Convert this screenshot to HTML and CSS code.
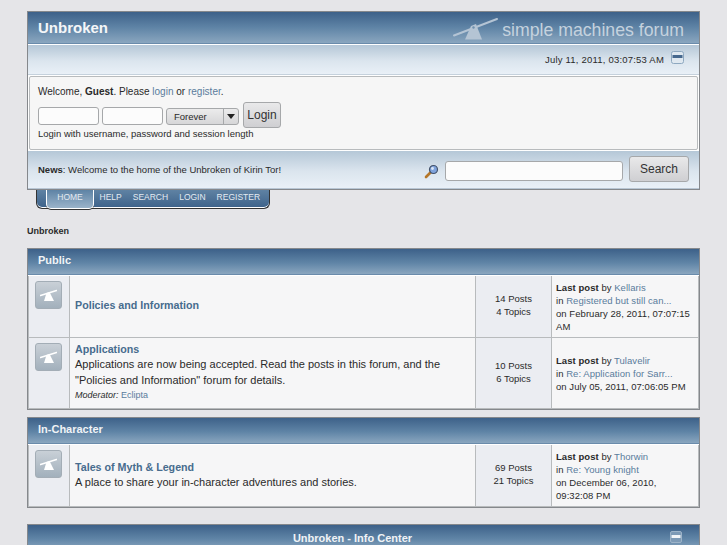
FILE: index.html
```html
<!DOCTYPE html>
<html lang="en">
<head>
  <meta charset="UTF-8" />
  <title>Unbroken - Index</title>
  <link rel="stylesheet" href="styles.css">
</head>
<body>

  <svg class="defs" width="0" height="0">
    <symbol id="seesaw" viewBox="0 0 45 22">
      <path d="M1 17.5 L44 1" stroke="currentColor" stroke-width="2" stroke-linecap="round" fill="none" />
      <path d="M18 8 L23 6 L29 21.5 L12 21.5 Z" fill="currentColor" />
      <circle cx="20.5" cy="9.5" r="1.2" fill="#6f90ae" />
    </symbol>
    <symbol id="seesaw-small" viewBox="0 0 17 12">
      <path d="M0.5 6.5 L16.5 1.5" stroke="currentColor" stroke-width="1.6" stroke-linecap="round" fill="none" />
      <path d="M6.5 4 L9.5 3 L14 12 L4 12 Z" fill="currentColor" />
    </symbol>
    <symbol id="minus" viewBox="0 0 13 13">
      <rect x="0.5" y="0.5" width="12" height="12" rx="2" fill="#dfe8f0" stroke="#8ea8c0" />
      <rect x="1.5" y="4" width="10" height="3" fill="#46688e" />
    </symbol>
    <symbol id="minus-light" viewBox="0 0 12 12">
      <rect x="0.5" y="0.5" width="11" height="11" rx="1.5" fill="#7d9ab6" stroke="#9db3c8" />
      <rect x="1.5" y="4" width="9" height="3" fill="#f2f5f8" />
    </symbol>
  </svg>

  <div class="header">
    <div class="titlebar">
      <h1>Unbroken</h1>
      <div class="smf-logo">
        <svg class="smf-mark" width="45" height="22"><use href="#seesaw" /></svg>
        <span>simple machines forum</span>
      </div>
    </div>
    <div class="datebar">
      <span>July 11, 2011, 03:07:53 AM</span>
      <svg class="toggle" width="13" height="13"><use href="#minus" /></svg>
    </div>
    <div class="userbox">
      <p class="welcome">Welcome, <b>Guest</b>. Please <a href="#">login</a> or <a href="#">register</a>.</p>
      <form class="loginform">
        <input type="text" class="field" />
        <input type="password" class="field" />
        <div class="select">
          <span class="select-label">Forever</span>
          <span class="select-arrow"></span>
        </div>
        <button type="button" class="btn btn-login">Login</button>
      </form>
      <p class="hint">Login with username, password and session length</p>
    </div>
    <div class="newsbar">
      <p class="news"><b>News</b>: Welcome to the home of the Unbroken of Kirin Tor!</p>
      <svg class="magnifier" width="15" height="15" viewBox="0 0 15 15">
        <path d="M7 8 L2 13" stroke="#b5772a" stroke-width="2.6" stroke-linecap="round" />
        <circle cx="9.5" cy="5.5" r="4" fill="#7fa3dc" stroke="#44536b" stroke-width="1.2" />
        <circle cx="8.5" cy="4.5" r="1.4" fill="#dbe7f7" />
      </svg>
      <input type="text" class="field searchfield" />
      <button type="button" class="btn btn-search">Search</button>
    </div>
  </div>

  <nav class="menu">
    <a href="#" class="active">HOME</a>
    <a href="#">HELP</a>
    <a href="#">SEARCH</a>
    <a href="#">LOGIN</a>
    <a href="#">REGISTER</a>
  </nav>

  <div class="crumb">Unbroken</div>

  <section class="category">
    <h2 class="cat-title">Public</h2>
    <div class="board board-short">
      <div class="board-icon"><span class="icon-box"><svg width="17" height="12"><use href="#seesaw-small" /></svg></span></div>
      <div class="board-info">
        <a href="#" class="board-name">Policies and Information</a>
      </div>
      <div class="board-stats">14 Posts<br>4 Topics</div>
      <div class="board-last"><div><b>Last post</b> by <a href="#">Kellaris</a><br>in <a href="#">Registered but still can...</a><br>on February 28, 2011, 07:07:15 AM</div></div>
    </div>
    <div class="board board-tall">
      <div class="board-icon"><span class="icon-box"><svg width="17" height="12"><use href="#seesaw-small" /></svg></span></div>
      <div class="board-info">
        <a href="#" class="board-name">Applications</a>
        <p>Applications are now being accepted. Read the posts in this forum, and the "Policies and Information" forum for details.</p>
        <p class="moderator"><em>Moderator:</em> <a href="#">Eclipta</a></p>
      </div>
      <div class="board-stats">10 Posts<br>6 Topics</div>
      <div class="board-last"><div><b>Last post</b> by <a href="#">Tulavelir</a><br>in <a href="#">Re: Application for Sarr...</a><br>on July 05, 2011, 07:06:05 PM</div></div>
    </div>
  </section>

  <section class="category">
    <h2 class="cat-title">In-Character</h2>
    <div class="board board-short">
      <div class="board-icon"><span class="icon-box"><svg width="17" height="12"><use href="#seesaw-small" /></svg></span></div>
      <div class="board-info">
        <a href="#" class="board-name">Tales of Myth &amp; Legend</a>
        <p>A place to share your in-character adventures and stories.</p>
      </div>
      <div class="board-stats">69 Posts<br>21 Topics</div>
      <div class="board-last"><div><b>Last post</b> by <a href="#">Thorwin</a><br>in <a href="#">Re: Young knight</a><br>on December 06, 2010, 09:32:08 PM</div></div>
    </div>
  </section>

  <section class="category infocenter">
    <h2 class="cat-title">Unbroken - Info Center
      <svg class="toggle-info" width="12" height="12"><use href="#minus-light" /></svg>
    </h2>
  </section>

</body>
</html>
```
FILE: styles.css
```css
html { height: 100%; overflow: hidden; }
body { margin: 0; height: 100%; overflow: hidden; padding: 11px 27px 0; box-sizing: border-box; background: #e5e5e8; font-family: "Liberation Sans", Arial, sans-serif; font-size: 10px; color: #2a2a2a; }
a { color: #5a7c9c; text-decoration: none; }
p, h1, h2 { margin: 0; }
.defs { position: absolute; }

.header { border: 1px solid #85888c; background: #fff; }
.titlebar { height: 31px; display: flex; align-items: center; justify-content: space-between; padding: 0 15px 0 10px; background: linear-gradient(#3d6189, #5f84a6 50%, #8aa6bf); border-bottom: 1px solid #6a8bab; }
.titlebar h1 { font-size: 15px; font-weight: bold; color: #f4f6f8; }
.smf-logo { display: flex; align-items: center; color: #c5d2de; font-size: 17.7px; gap: 4px; padding-top: 5px; }
.smf-mark { color: #b4c4d4; margin-top: -2px; }
.datebar { height: 31px; display: flex; align-items: center; justify-content: flex-end; gap: 7px; padding: 0 15px 0 0; box-sizing: border-box; border-top: 1px solid #fff; border-bottom: 1px solid #c5d1dc; background: linear-gradient(#b5c7d7, #dbe5ee 55%, #e9f0f7); font-size: 9.5px; letter-spacing: 0.2px; }
.datebar .toggle { margin-top: -4px; }
.userbox { margin: 1px; height: 74px; box-sizing: border-box; border: 1px solid #b8bbbd; border-radius: 2px; background: #f6f6f6; padding: 8px 8px 0; }
.welcome { font-size: 10px; line-height: 13px; }
.loginform { display: flex; align-items: center; gap: 3px; margin-top: 3px; height: 28px; }
.field { height: 18px; width: 61px; padding: 0; box-sizing: border-box; border: 1px solid #a6a8aa; border-radius: 3px; background: #fcfcfc; margin-top: 2px; }
.select { width: 73px; height: 17px; margin-top: 2px; display: flex; box-sizing: border-box; border: 1px solid #a6a8aa; border-radius: 3px; background: linear-gradient(#ececec, #d6d6d8); font-size: 9.5px; }
.select-label { flex: 1; line-height: 16px; padding-left: 7px; border-right: 1px solid #a6a8aa; }
.select-arrow { width: 14px; position: relative; }
.select-arrow::after { content: ""; position: absolute; left: 3px; top: 5px; border: 4px solid transparent; border-top: 5px solid #222; border-bottom: 0; }
.btn { padding: 0; box-sizing: border-box; border: 1px solid #a6a8aa; border-radius: 3px; background: linear-gradient(#e9e9ea, #cfcfd2); font-family: "Liberation Sans", Arial, sans-serif; font-size: 12px; color: #333; }
.btn-login { width: 38px; height: 26px; margin-left: 1px; }
.hint { font-size: 9.5px; line-height: 12px; margin-top: -1px; }
.newsbar { height: 38px; box-sizing: border-box; display: flex; align-items: center; padding: 0 10px 1px 10px; background: linear-gradient(#b5c7d7, #dbe5ee 55%, #e9f0f7); border-bottom: 1px solid #b8c6d4; }
.news { flex: 1; font-size: 9.5px; }
.magnifier { margin-right: 6px; margin-top: 5px; }
.searchfield { width: 178px; height: 20px; margin-right: 6px; margin-top: 3px; }
.btn-search { width: 60px; height: 26px; }

.menu { margin: 0 0 0 9px; width: 234px; height: 19px; box-sizing: border-box; display: flex; padding: 0 0 0 9px; background: linear-gradient(#5f82a3, #3d628a); border: 1px solid #333; border-top: 0; border-radius: 0 0 6px 6px; box-shadow: inset 0 -1px 0 #fff; }
.menu a { flex: none; color: #e4ebf2; font-size: 8.5px; line-height: 15px; padding: 0 5.5px; }
.menu a.active { width: 48px; box-sizing: border-box; padding: 0; text-align: center; background: linear-gradient(#5e83a5, #9ab3c9); border: 1px solid #fff; border-top: 0; border-radius: 0 0 5px 5px; box-shadow: 0 1px 0 #333; height: 19px; }

.crumb { margin: 16px 0 11px; height: 12px; line-height: 12px; font-size: 9px; font-weight: bold; }

.category { border: 1px solid #85888c; margin-bottom: 7px; background: #fff; }
.cat-title { height: 26px; line-height: 23px; box-sizing: border-box; padding-left: 10px; background: linear-gradient(#3d6189, #5f84a6 55%, #8aa6bf); border-bottom: 1px solid #6a8bab; color: #f0f3f6; font-size: 11px; font-weight: bold; margin-bottom: 1px; }
.board { display: grid; grid-template-columns: 42px 1fr 76px 147px; box-sizing: border-box; border-bottom: 1px solid #b8bbbd; font-size: 11px; }
.board-short { height: 62px; }
.board-tall { height: 71px; }
.board-icon { background: #ebedf2; border-right: 1px solid #b8bbbd; border-left: 1px solid #b8bbbd; padding: 5px 0 0 6px; }
.icon-box { width: 27px; height: 28px; display: flex; align-items: center; justify-content: center; box-sizing: border-box; border: 1px solid #a3adb6; border-radius: 3px; background: linear-gradient(#c9d0d7, #a2b0bc); color: #fff; }
.board-info { background: #f6f6f7; border-right: 1px solid #b8bbbd; padding: 0 30px 1px 5px; display: flex; flex-direction: column; justify-content: center; line-height: 15.5px; }
.board-name { font-size: 10.7px; font-weight: bold; color: #476c8e; }
.moderator { font-size: 9px; }
.board-stats { background: #ebedf2; border-right: 1px solid #b8bbbd; padding-bottom: 3px; display: flex; align-items: center; justify-content: center; text-align: center; font-size: 9.5px; line-height: 13px; }
.board-last { background: #f6f6f7; border-right: 1px solid #b8bbbd; padding: 0 5px 0 4px; display: flex; align-items: center; font-size: 9.5px; line-height: 13px; letter-spacing: 0.05px; }

.infocenter { margin-top: 16px; }
.infocenter .cat-title { text-align: center; position: relative; padding: 0 22px 0 0; line-height: 26px; }
.toggle-info { position: absolute; right: 17px; top: 6px; }
```
